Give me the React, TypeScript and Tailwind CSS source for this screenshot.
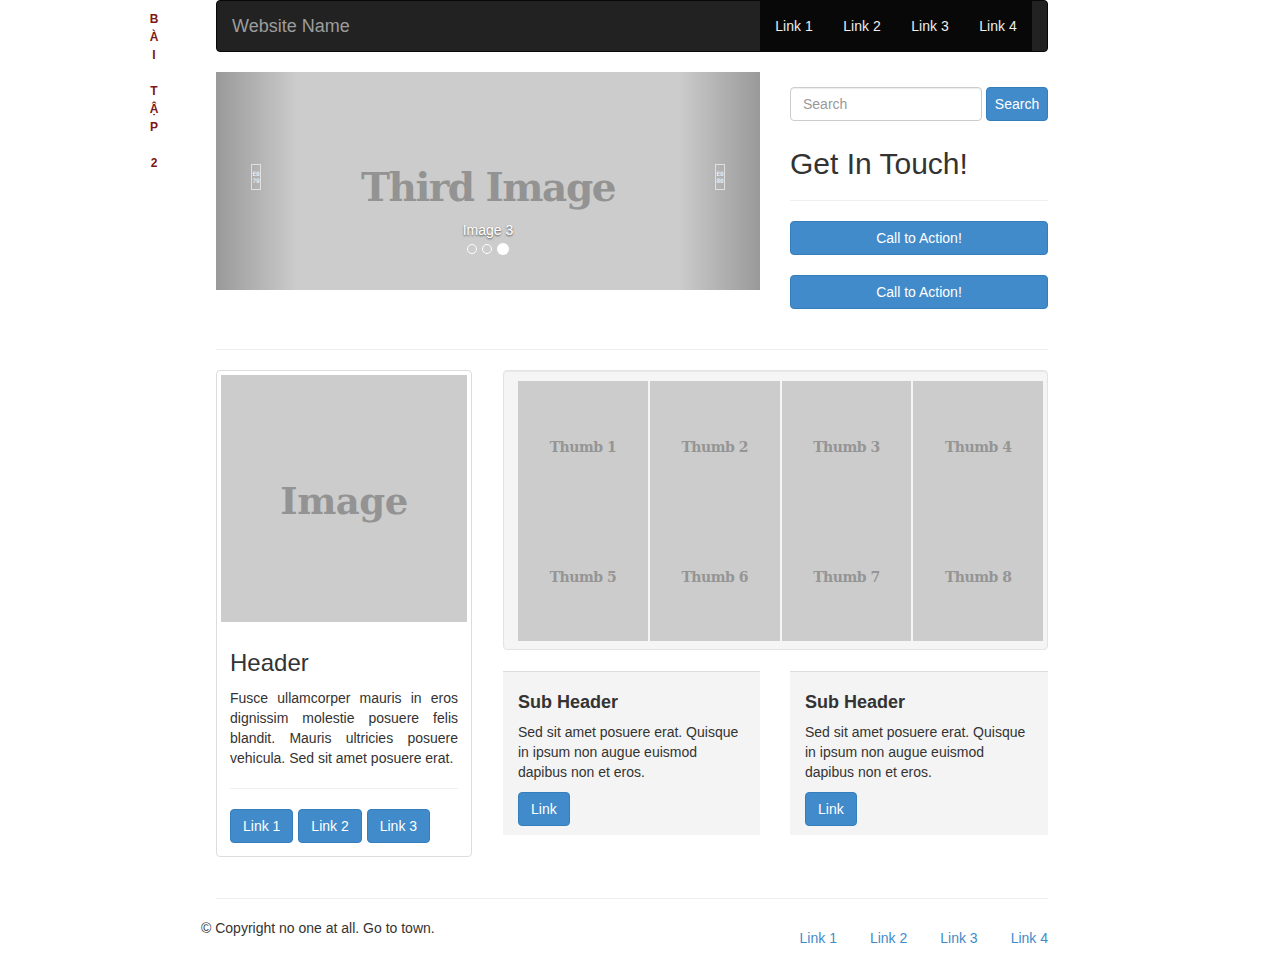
import React from "react";

const navLinks = ["Link 1", "Link 2", "Link 3", "Link 4"];
const sideTitle = ["B", "À", "I", "\u00a0", "T", "Ậ", "P", "\u00a0", "2"];
const thumbs = ["Thumb 1", "Thumb 2", "Thumb 3", "Thumb 4", "Thumb 5", "Thumb 6", "Thumb 7", "Thumb 8"];

const btn =
  "inline-flex items-center justify-center h-[34px] rounded-[4px] border border-[#357ebd] bg-[#428bca] px-[12px] text-[14px] text-white";

function Tofu({ code }: { code: string }) {
  return (
    <span className="flex h-[26px] w-[10px] flex-col items-center justify-center border border-white/60 font-['DejaVu_Sans_Mono',monospace] text-[6px] leading-[7px] text-white">
      <span>{code.slice(0, 2)}</span>
      <span>{code.slice(2)}</span>
    </span>
  );
}

function Carousel() {
  return (
    <div className="relative h-[218px] w-[544px] overflow-hidden bg-[#cccccc]">
      <div className="flex h-full flex-col items-center justify-center">
        <div className="mt-[12px] font-['DejaVu_Serif',serif] text-[39px] font-bold leading-none tracking-[-1.5px] text-[#939393]">
          Third Image
        </div>
      </div>
      <div className="absolute left-0 top-0 h-full w-[82px] bg-gradient-to-r from-black/25 to-transparent" />
      <div className="absolute right-0 top-0 h-full w-[82px] bg-gradient-to-l from-black/25 to-transparent" />
      <div className="absolute left-[35px] top-[92px]">
        <Tofu code="E079" />
      </div>
      <div className="absolute right-[35px] top-[92px]">
        <Tofu code="E080" />
      </div>
      <div className="absolute left-0 right-0 top-[148px] text-center text-[14px] leading-[20px] text-white [text-shadow:0_1px_2px_rgba(0,0,0,0.6)]">
        Image 3
      </div>
      <div className="absolute left-0 right-0 top-[171px] flex items-center justify-center gap-[5px]">
        <span className="h-[10px] w-[10px] rounded-full border border-white" />
        <span className="h-[10px] w-[10px] rounded-full border border-white" />
        <span className="h-[12px] w-[12px] rounded-full bg-white" />
      </div>
    </div>
  );
}

function SubPanel() {
  return (
    <div className="border-t border-[#dddddd] bg-[#f4f4f4] px-[15px] pt-[20px] pb-[9px]">
      <h4 className="text-[18px] font-bold leading-[20px] text-[#333]">Sub Header</h4>
      <p className="mt-[10px] text-[14px] leading-[20px] text-[#333]">
        Sed sit amet posuere erat. Quisque in ipsum non augue euismod dapibus non et eros.
      </p>
      <a className={`${btn} mt-[10px]`}>Link</a>
    </div>
  );
}

export default function App() {
  return (
    <div className="min-h-screen bg-white font-['Liberation_Sans',Arial,sans-serif] text-[#333]">
      <div className="flex">
        <aside className="w-[216px] shrink-0">
          <div className="ml-[146px] w-[16px] pt-[10px] text-center text-[12px] font-bold leading-[18px] text-[#7d1616]">
            {sideTitle.map((c, i) => (
              <div key={i}>{c}</div>
            ))}
          </div>
        </aside>

        <main className="w-[832px] shrink-0">
          <header className="flex h-[52px] items-stretch rounded-[4px] border border-[#080808] bg-[#222222]">
            <div className="flex w-[543px] items-center pl-[15px] text-[18px] text-[#9d9d9d]">Website Name</div>
            <nav className="flex bg-[#080808]">
              {navLinks.map((l) => (
                <a key={l} className="flex w-[68px] items-center justify-center text-[14px] text-[#eeeeee]">
                  {l}
                </a>
              ))}
            </nav>
          </header>

          <div className="mt-[20px] flex gap-[30px]">
            <Carousel />
            <div className="w-[258px] pt-[15px]">
              <div className="flex gap-[4px]">
                <input
                  placeholder="Search"
                  className="h-[34px] w-[192px] rounded-[4px] border border-[#cccccc] px-[12px] text-[14px] shadow-[inset_0_1px_1px_rgba(0,0,0,0.075)] placeholder:text-[#999]"
                />
                <button className={`${btn} w-[62px] px-0`}>Search</button>
              </div>
              <h2 className="mt-[26px] text-[30px] leading-[33px] text-[#333]">Get In Touch!</h2>
              <hr className="mt-[20px] border-t border-[#eeeeee]" />
              <a className={`${btn} mt-[20px] w-full`}>Call to Action!</a>
              <a className={`${btn} mt-[20px] w-full`}>Call to Action!</a>
            </div>
          </div>

          <hr className="mt-[40px] border-t border-[#eeeeee]" />

          <div className="mt-[20px] flex items-start gap-[31px]">
            <div className="w-[256px] rounded-[4px] border border-[#dddddd] p-[4px]">
              <div className="flex h-[247px] items-center justify-center bg-[#cccccc]">
                <span className="mt-[6px] font-['DejaVu_Serif',serif] text-[37px] font-bold leading-none tracking-[-0.5px] text-[#939393]">
                  Image
                </span>
              </div>
              <div className="px-[9px] pb-[9px]">
                <h3 className="mt-[28px] text-[24px] leading-[26px] text-[#333]">Header</h3>
                <p className="mt-[12px] text-justify text-[14px] leading-[20px] text-[#333]">
                  Fusce ullamcorper mauris in eros dignissim molestie posuere felis blandit. Mauris ultricies posuere vehicula. Sed sit amet posuere erat.
                </p>
                <hr className="mt-[20px] border-t border-[#eeeeee]" />
                <div className="mt-[20px] flex gap-[5px]">
                  <a className={btn}>Link 1</a>
                  <a className={btn}>Link 2</a>
                  <a className={btn}>Link 3</a>
                </div>
              </div>
            </div>

            <div className="w-[545px]">
              <div className="rounded-[4px] border border-[#e3e3e3] bg-[#f5f5f5] pl-[14px] pt-[10px] pb-[8px] shadow-[inset_0_1px_1px_rgba(0,0,0,0.05)]">
                <div className="grid w-[525px] grid-cols-4 gap-x-[2px]">
                  {thumbs.map((t) => (
                    <div key={t} className="flex h-[130px] items-center justify-center bg-[#cccccc]">
                      <span className="mt-[3px] font-['DejaVu_Serif',serif] text-[14px] font-bold tracking-[-0.5px] text-[#959595]">
                        {t}
                      </span>
                    </div>
                  ))}
                </div>
              </div>
              <div className="mt-[21px] grid grid-cols-[257px_258px] gap-[30px]">
                <SubPanel />
                <SubPanel />
              </div>
            </div>
          </div>

          <hr className="mt-[41px] border-t border-[#eeeeee]" />

          <footer className="flex items-start justify-between">
            <p className="-ml-[15px] mt-[19px] text-[14px] leading-[20px] text-[#333]">
              © Copyright no one at all. Go to town.
            </p>
            <div className="mt-[29px] flex gap-[33px] text-[14px] leading-[20px] text-[#428bca]">
              {navLinks.map((l) => (
                <a key={l}>{l}</a>
              ))}
            </div>
          </footer>
        </main>
      </div>
    </div>
  );
}
